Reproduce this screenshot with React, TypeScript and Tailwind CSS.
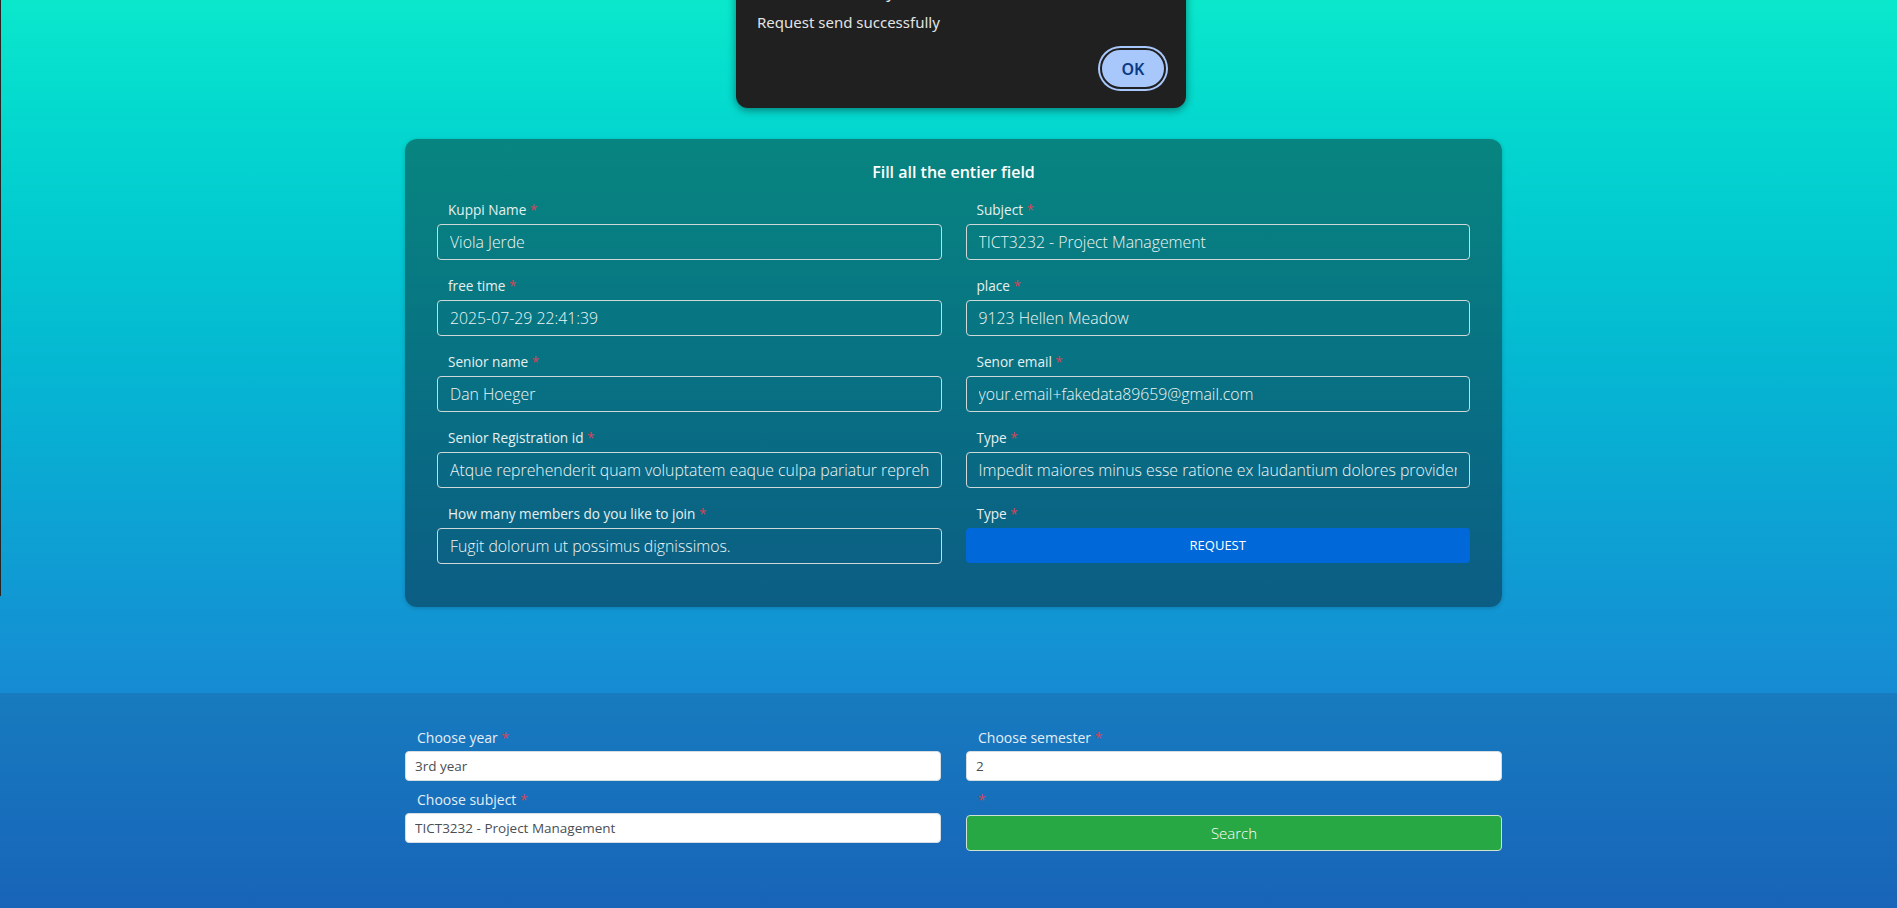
import React from "react";

const font = { fontFamily: '"Open Sans", "Noto Sans", sans-serif' };

interface FieldProps {
  label: string;
  value: string;
}

const Required = () => <span className="text-[#d2455a]"> *</span>;

const Field = ({ label, value }: FieldProps) => {
  return (
    <div className="flex flex-col">
      <label className="h-[20px] mb-[4px] pl-[11px] text-[13.6px] leading-[20px] text-[#e6f0f0]">
        {label}
        <Required />
      </label>
      <input
        readOnly
        value={value}
        className="h-[36px] w-full rounded-[4px] border border-[#cfd8d8] bg-transparent px-[12px] text-[15.8px] font-light text-[#eef6f6] outline-none"
        style={font}
      />
    </div>
  );
};

const PickField = ({ label, value }: FieldProps) => {
  return (
    <div className="flex flex-col">
      <label className="h-[22px] mb-[2px] pl-[12px] text-[14px] leading-[22px] text-[#e4eef6]">
        {label}
        <Required />
      </label>
      <input
        readOnly
        value={value}
        className="h-[30px] w-full rounded-[4px] border border-[#d6dde3] bg-white px-[9px] text-[13.5px] text-[#4a4f55] outline-none"
        style={font}
      />
    </div>
  );
};

const AlertBox = () => {
  return (
    <div
      className="absolute left-[736px] top-[-31px] w-[450px] h-[139px] rounded-[12px] bg-[#202020] shadow-[0_2px_8px_rgba(0,0,0,0.45)] pt-[11px] pl-[21px] pr-[18px] flex flex-col"
      style={{ fontFamily: '"Noto Sans", "DejaVu Sans", sans-serif' }}
    >
      <div className="h-[24px] text-[16px] leading-[24px] text-[#e3e3e3]">
        localhost:5173 says
      </div>
      <div className="mt-[6px] h-[24px] text-[15px] leading-[24px] text-[#e3e3e3]">
        Request send successfully
      </div>
      <div className="mt-[14px] flex justify-end pr-[2px]">
        <button className="h-[41px] w-[66px] rounded-full border-2 border-[#202020] bg-[#a8c7fa] ring-2 ring-[#a8c7fa] text-[16px] font-semibold text-[#0a3a86]">
          OK
        </button>
      </div>
    </div>
  );
};

export default function App() {
  return (
    <div className="relative min-h-[908px] overflow-hidden" style={font}>
      <div className="absolute left-0 top-0 h-[596px] w-[1px] bg-[#262626]" />
      <AlertBox />

      <section className="h-[693px] bg-gradient-to-b from-[#0ae8cc] to-[#168bd3] pt-[139px] pl-[10px] flex justify-center">
        <div className="w-[1097px] h-[468px] rounded-[12px] bg-gradient-to-b from-[#088580] to-[#0c5d84] shadow-[0_1px_4px_rgba(0,0,0,0.2)] px-[32px] pt-[21px]">
          <h2 className="h-[24px] text-center text-[16px] font-semibold leading-[24px] text-white">
            Fill all the entier field
          </h2>

          <div className="mt-[16px] grid grid-cols-2 gap-x-[24px] gap-y-[16px]">
            <Field label="Kuppi Name" value="Viola Jerde" />
            <Field label="Subject" value="TICT3232 - Project Management" />
            <Field label="free time" value="2025-07-29 22:41:39" />
            <Field label="place" value="9123 Hellen Meadow" />
            <Field label="Senior name" value="Dan Hoeger" />
            <Field label="Senor email" value="your.email+fakedata89659@gmail.com" />
            <Field
              label="Senior Registration id"
              value="Atque reprehenderit quam voluptatem eaque culpa pariatur reprehenderit"
            />
            <Field
              label="Type"
              value="Impedit maiores minus esse ratione ex laudantium dolores provident"
            />
            <Field
              label="How many members do you like to join"
              value="Fugit dolorum ut possimus dignissimos."
            />
            <div className="flex flex-col">
              <label className="h-[20px] mb-[4px] pl-[11px] text-[13.6px] leading-[20px] text-[#e6f0f0]">
                Type
                <Required />
              </label>
              <button className="h-[35px] w-full rounded-[4px] bg-[#0068d9] text-[13px] text-white">
                REQUEST
              </button>
            </div>
          </div>
        </div>
      </section>

      <section className="h-[215px] bg-gradient-to-b from-[#177bbf] to-[#1864b8] pt-[34px] pl-[10px] flex justify-center">
        <div className="w-[1097px] grid grid-cols-2 gap-x-[25px] gap-y-[8px] content-start">
          <PickField label="Choose year" value="3rd year" />
          <PickField label="Choose semester" value="2" />
          <PickField label="Choose subject" value="TICT3232 - Project Management" />
          <div className="flex flex-col">
            <div className="h-[22px] mb-[4px] pl-[12px] text-[14px] leading-[22px]">
              <Required />
            </div>
            <button className="h-[36px] w-full rounded-[4px] border border-[#cfe3d3] bg-[#28a745] text-[15px] font-light text-white">
              Search
            </button>
          </div>
        </div>
      </section>
    </div>
  );
}
